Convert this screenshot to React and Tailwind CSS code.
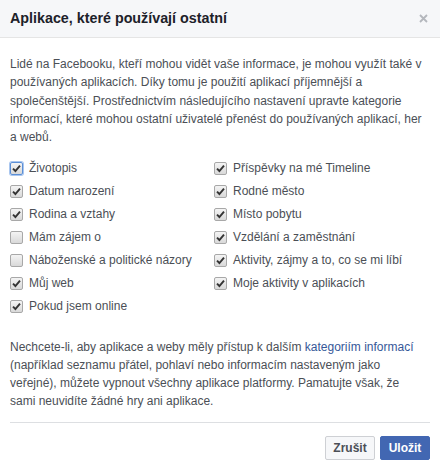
import React, { useState } from 'react';

const LEFT = [
  ['Životopis', true],
  ['Datum narození', true],
  ['Rodina a vztahy', true],
  ['Mám zájem o', false],
  ['Náboženské a politické názory', false],
  ['Můj web', true],
  ['Pokud jsem online', true],
];

const RIGHT = [
  ['Příspěvky na mé Timeline', true],
  ['Rodné město', true],
  ['Místo pobytu', true],
  ['Vzdělání a zaměstnání', true],
  ['Aktivity, zájmy a to, co se mi líbí', true],
  ['Moje aktivity v aplikacích', true],
];

function Box({ checked, focused, onClick }) {
  return (
    <span
      onClick={onClick}
      className={
        'flex h-[13px] w-[13px] shrink-0 items-center justify-center rounded-[2px] border bg-gradient-to-b from-[#f4f4f4] to-[#d9d9d9] ' +
        (focused ? 'border-[#5b8fd6] shadow-[0_0_0_1px_#a9c6ef]' : 'border-[#a8a8a8]')
      }
    >
      {checked && (
        <svg width="9" height="9" viewBox="0 0 9 9">
          <path d="M1 4.6 L3.4 7 L8 1.6" fill="none" stroke="#333" strokeWidth="1.9" />
        </svg>
      )}
    </span>
  );
}

function Column({ items, state, toggle, offset }) {
  return (
    <div className="flex flex-col gap-[7px]">
      {items.map(([label], i) => (
        <label key={label} className="flex h-[16px] items-center gap-[6px] cursor-pointer">
          <Box checked={state[offset + i]} focused={offset + i === 0} onClick={() => toggle(offset + i)} />
          <span>{label}</span>
        </label>
      ))}
    </div>
  );
}

export default function App() {
  const [state, setState] = useState([...LEFT, ...RIGHT].map(([, v]) => v));
  const toggle = (i) => setState(state.map((v, j) => (j === i ? !v : v)));

  return (
    <div className="h-[466px] w-[440px] bg-white text-[12px] text-[#4b4f56] font-['Liberation_Sans',Arial,sans-serif]">
      <div className="flex h-[38px] items-center justify-between border-b border-[#e5e5e5] bg-[#f6f7f9] pl-[10px] pr-[12px]">
        <h1 className="text-[14.3px] font-bold text-[#1d2129]">Aplikace, které používají ostatní</h1>
        <svg width="9" height="9" viewBox="0 0 9 9">
          <path d="M1 1 L8 8 M8 1 L1 8" stroke="#b4b7bd" strokeWidth="1.8" />
        </svg>
      </div>

      <div className="pl-[10px] pr-[13px] pt-[17px]">
        <p className="leading-[18.3px]">
          Lidé na Facebooku, kteří mohou vidět vaše informace, je mohou využít také v používaných aplikacích. Díky tomu je
          použití aplikací příjemnější a společenštější. Prostřednictvím následujícího nastavení upravte kategorie
          informací, které mohou ostatní uživatelé přenést do používaných aplikací, her a webů.
        </p>

        <div className="mt-[14px] grid grid-cols-[204px_1fr]">
          <Column items={LEFT} state={state} toggle={toggle} offset={0} />
          <Column items={RIGHT} state={state} toggle={toggle} offset={LEFT.length} />
        </div>

        <p className="mt-[24px] leading-[18px]">
          Nechcete-li, aby aplikace a weby měly přístup k dalším{' '}
          <a className="text-[#365899]">kategoriím informací</a> (například seznamu přátel, pohlaví nebo informacím
          nastaveným jako veřejné), můžete vypnout všechny aplikace platformy. Pamatujte však, že sami neuvidíte žádné
          hry ani aplikace.
        </p>

        <div className="mt-[12px] -mr-[3px] border-t border-[#dddfe2]" />

        <div className="-mr-[3px] flex justify-end gap-[5px] pt-[13px]">
          <button className="h-[24px] w-[50px] rounded-[2px] border border-[#ced0d4] bg-[#f6f7f9] font-bold text-[#4b4f56]">
            Zrušit
          </button>
          <button className="h-[24px] w-[50px] rounded-[2px] border border-[#4267b2] bg-[#4267b2] font-bold text-white">
            Uložit
          </button>
        </div>
      </div>
    </div>
  );
}
